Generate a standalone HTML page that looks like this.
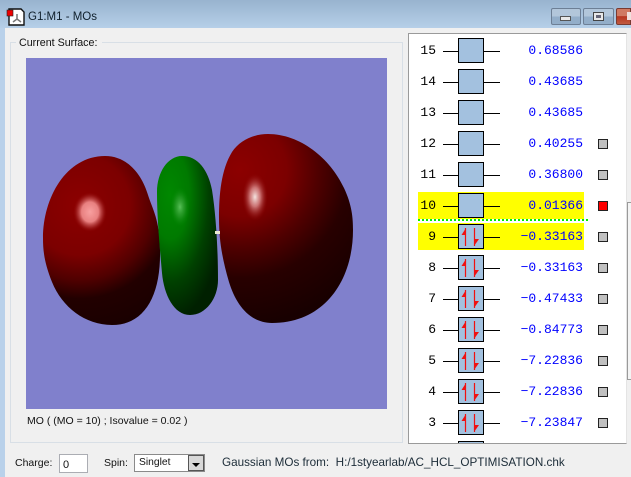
<!DOCTYPE html>
<html><head><meta charset="utf-8"><style>
html,body{margin:0;padding:0}
body{width:631px;height:477px;overflow:hidden;position:relative;background:#f0f0f0;font-family:"Liberation Sans",sans-serif;font-size:12px;color:#111}
div{position:absolute;box-sizing:border-box}
.t{white-space:nowrap;line-height:14px}
.n{left:412px;width:24px;text-align:right;font:13px/16px "Liberation Mono",monospace;color:#000}
.e{left:490px;width:93px;text-align:right;font:13px/16px "Liberation Mono",monospace;color:#00f}
.l{left:443px;width:57px;height:1px;background:#000}
.b{left:458px;width:26px;height:25px;background:#a3c1df;border:1px solid #000}
.b svg{display:block}
.s{left:598px;width:10px;height:10px;background:#c0c0c0;border:1px solid #222}
</style></head><body>
<div style="left:0;top:0;width:631px;height:28px;background:linear-gradient(#98b3cf,#b6cfe8)"></div>
<div style="left:0;top:28px;width:5px;height:449px;background:#b9d1ea"></div>
<svg style="position:absolute;left:6px;top:7px" width="19" height="20"><path d="M3 2H15L18 5V18H3Z" fill="#fff" stroke="#111" stroke-width="1.4"/><rect x="1" y="3" width="6" height="6" fill="#e00" stroke="#222" stroke-width=".6"/><path d="M11 7V12L7 15M11 12L15 15" stroke="#777" stroke-width="1.5" fill="none"/></svg>
<div class="t" style="left:28px;top:10px;font-size:11.5px;color:#10202c">G1:M1 - MOs</div>
<div style="left:551px;top:8px;width:30px;height:17px;border:1px solid #6d7f95;border-radius:2px;background:linear-gradient(#b2c6da 50%,#93aec9 50%)"></div>
<div style="left:560px;top:16px;width:11px;height:5px;background:#e8e8e8;border:1px solid #555"></div>
<div style="left:583px;top:8px;width:31px;height:17px;border:1px solid #6d7f95;border-radius:2px;background:linear-gradient(#b2c6da 50%,#93aec9 50%)"></div>
<div style="left:593px;top:12px;width:11px;height:9px;background:#e8e8e8;border:1px solid #444"></div>
<div style="left:596px;top:15px;width:5px;height:3px;background:#667"></div>
<div style="left:616px;top:8px;width:15px;height:17px;border:1px solid #7a3a30;border-radius:2px 0 0 2px;background:linear-gradient(#d07a62 45%,#b8361f 50%,#c05a40)"></div>
<div style="left:627px;top:12px;width:4px;height:8px;background:#f0e0dc"></div>
<div style="left:10px;top:42px;width:393px;height:1px;background:#d8dfe6"></div>
<div style="left:10px;top:42px;width:1px;height:401px;background:#d8dfe6;border-radius:2px"></div>
<div style="left:10px;top:442px;width:393px;height:1px;background:#d8dfe6"></div>
<div style="left:402px;top:42px;width:1px;height:401px;background:#d8dfe6"></div>
<div class="t" style="left:16px;top:36px;padding:0 5px 0 3px;background:#f0f0f0;font-size:10.7px">Current Surface:</div>
<svg style="position:absolute;left:26px;top:58px" width="361" height="351" viewBox="26 58 361 351">
<defs>
<radialGradient id="r1" gradientUnits="userSpaceOnUse" cx="80" cy="205" r="125"><stop offset="0" stop-color="#8c0000"/><stop offset=".4" stop-color="#7c0000"/><stop offset=".6" stop-color="#500000"/><stop offset=".75" stop-color="#220000"/><stop offset="1" stop-color="#1a0000"/></radialGradient>
<radialGradient id="r2" gradientUnits="userSpaceOnUse" cx="240" cy="170" r="155"><stop offset="0" stop-color="#8c0000"/><stop offset=".3" stop-color="#7c0000"/><stop offset=".5" stop-color="#500000"/><stop offset=".7" stop-color="#280000"/><stop offset="1" stop-color="#180000"/></radialGradient>
<radialGradient id="g1" gradientUnits="userSpaceOnUse" cx="0" cy="0" r="1" gradientTransform="translate(170 195) scale(55 125)"><stop offset="0" stop-color="#008800"/><stop offset=".35" stop-color="#007a00"/><stop offset=".7" stop-color="#004000"/><stop offset="1" stop-color="#002000"/></radialGradient>
<radialGradient id="h1"><stop offset="0" stop-color="#f8a0a0"/><stop offset=".5" stop-color="#e88080"/><stop offset=".75" stop-color="#b84040" stop-opacity=".6"/><stop offset="1" stop-color="#8c0000" stop-opacity="0"/></radialGradient>
<radialGradient id="h2"><stop offset="0" stop-color="#f4e4e0"/><stop offset=".4" stop-color="#d88888" stop-opacity=".85"/><stop offset="1" stop-color="#8c0000" stop-opacity="0"/></radialGradient>
<radialGradient id="h3"><stop offset="0" stop-color="#58c058"/><stop offset=".5" stop-color="#30a030" stop-opacity=".6"/><stop offset="1" stop-color="#008800" stop-opacity="0"/></radialGradient>
</defs>
<rect x="26" y="58" width="361" height="351" fill="#8080cc"/>
<path d="M105 156C128 156 142 175 148 195C152 208 160 220 160 250C161 295 145 325 112 325C85 325 62 307 52 282C44 262 43 250 43 238C43 198 66 156 105 156Z" fill="url(#r1)"/>
<ellipse cx="90" cy="212" rx="17" ry="20" fill="url(#h1)"/>
<path d="M182 156C198 156 208 170 212 190C216 215 218 250 218 280C218 298 206 315 190 315C174 315 164 295 162 273C160 250 157 220 157 192C157 172 168 156 182 156Z" fill="url(#g1)"/>
<ellipse cx="180" cy="207" rx="10" ry="20" fill="url(#h3)"/>
<path d="M268 134C300 134 330 158 344 188C352 205 353 218 353 230C353 280 325 323 272 323C250 323 236 305 229 282C222 258 219 240 219 218C219 195 221 170 232 152C240 140 254 134 268 134Z" fill="url(#r2)"/>
<ellipse cx="255" cy="197" rx="13" ry="24" fill="url(#h2)"/>
<rect x="215" y="231" width="5" height="3" fill="#e8e8d0"/>
</svg>
<div class="t" style="left:27px;top:414px;font-size:10.5px">MO ( (MO = 10) ; Isovalue = 0.02 )</div>
<div class="t" style="left:15px;top:456px;font-size:10.5px">Charge:</div>
<div class="t" style="left:59px;top:454px;width:29px;height:19px;background:#fff;border:1px solid #abadb3;font-size:11px;padding:3px 0 0 3px">0</div>
<div class="t" style="left:104px;top:456px;font-size:10.5px">Spin:</div>
<div class="t" style="left:134px;top:454px;width:71px;height:18px;background:#fff;border:1px solid #8a8a8a;font-size:10.3px;padding:1px 0 0 4px">Singlet</div>
<div style="left:188px;top:455px;width:16px;height:16px;background:#d8d8d8;border:1px solid #555"></div>
<div style="left:192px;top:463px;border-left:4px solid transparent;border-right:4px solid transparent;border-top:4px solid #000"></div>
<div class="t" style="left:222px;top:456px;font-size:11.7px;color:#1c2c38">Gaussian MOs from:&nbsp; H:/1styearlab/AC_HCL_OPTIMISATION.chk</div>
<div style="left:408px;top:33px;width:219px;height:411px;background:#fff;border:1px solid #9a9a9a;border-right:1px solid #e4e4e4;overflow:hidden"></div>
<div style="left:627px;top:202px;width:4px;height:178px;background:#f4f4f4;border:1px solid #9a9a9a;border-right:0"></div>
<div style="left:418px;top:192px;width:166px;height:27px;background:#ff0"></div>
<div style="left:418px;top:223px;width:166px;height:27px;background:#ff0"></div>
<div style="left:418px;top:219px;width:170px;height:0;border-top:2px dotted #00f000"></div>
<svg width="0" height="0" style="position:absolute"><defs><g id="a"><path d="M6.5 3V21M15.5 3V21" stroke="#f01010" stroke-width="1.2"/><path d="M7 3L7 10L2.5 10Z M15 21L15 14L20 14Z" fill="#f01010"/></g></defs></svg>
<div class="n" style="top:43px">15</div><div class="l" style="top:51px"></div><div class="b" style="top:38px"></div><div class="e" style="top:43px">0.68586</div>
<div class="n" style="top:74px">14</div><div class="l" style="top:82px"></div><div class="b" style="top:69px"></div><div class="e" style="top:74px">0.43685</div>
<div class="n" style="top:105px">13</div><div class="l" style="top:113px"></div><div class="b" style="top:100px"></div><div class="e" style="top:105px">0.43685</div>
<div class="n" style="top:136px">12</div><div class="l" style="top:144px"></div><div class="b" style="top:131px"></div><div class="e" style="top:136px">0.40255</div><div class="s" style="top:139px"></div>
<div class="n" style="top:167px">11</div><div class="l" style="top:175px"></div><div class="b" style="top:162px"></div><div class="e" style="top:167px">0.36800</div><div class="s" style="top:170px"></div>
<div class="n" style="top:198px">10</div><div class="l" style="top:206px"></div><div class="b" style="top:193px"></div><div class="e" style="top:198px">0.01366</div><div class="s" style="top:201px;background:#f00"></div>
<div class="n" style="top:229px">9</div><div class="l" style="top:237px"></div><div class="b" style="top:224px"><svg width="24" height="23"><use href="#a"/></svg></div><div class="e" style="top:229px">−0.33163</div><div class="s" style="top:232px"></div>
<div class="n" style="top:260px">8</div><div class="l" style="top:268px"></div><div class="b" style="top:255px"><svg width="24" height="23"><use href="#a"/></svg></div><div class="e" style="top:260px">−0.33163</div><div class="s" style="top:263px"></div>
<div class="n" style="top:291px">7</div><div class="l" style="top:299px"></div><div class="b" style="top:286px"><svg width="24" height="23"><use href="#a"/></svg></div><div class="e" style="top:291px">−0.47433</div><div class="s" style="top:294px"></div>
<div class="n" style="top:322px">6</div><div class="l" style="top:330px"></div><div class="b" style="top:317px"><svg width="24" height="23"><use href="#a"/></svg></div><div class="e" style="top:322px">−0.84773</div><div class="s" style="top:325px"></div>
<div class="n" style="top:353px">5</div><div class="l" style="top:361px"></div><div class="b" style="top:348px"><svg width="24" height="23"><use href="#a"/></svg></div><div class="e" style="top:353px">−7.22836</div><div class="s" style="top:356px"></div>
<div class="n" style="top:384px">4</div><div class="l" style="top:392px"></div><div class="b" style="top:379px"><svg width="24" height="23"><use href="#a"/></svg></div><div class="e" style="top:384px">−7.22836</div><div class="s" style="top:387px"></div>
<div class="n" style="top:415px">3</div><div class="l" style="top:423px"></div><div class="b" style="top:410px"><svg width="24" height="23"><use href="#a"/></svg></div><div class="e" style="top:415px">−7.23847</div><div class="s" style="top:418px"></div>
<div class="b" style="top:441px;height:2px;border-bottom:0"></div>
</body></html>
